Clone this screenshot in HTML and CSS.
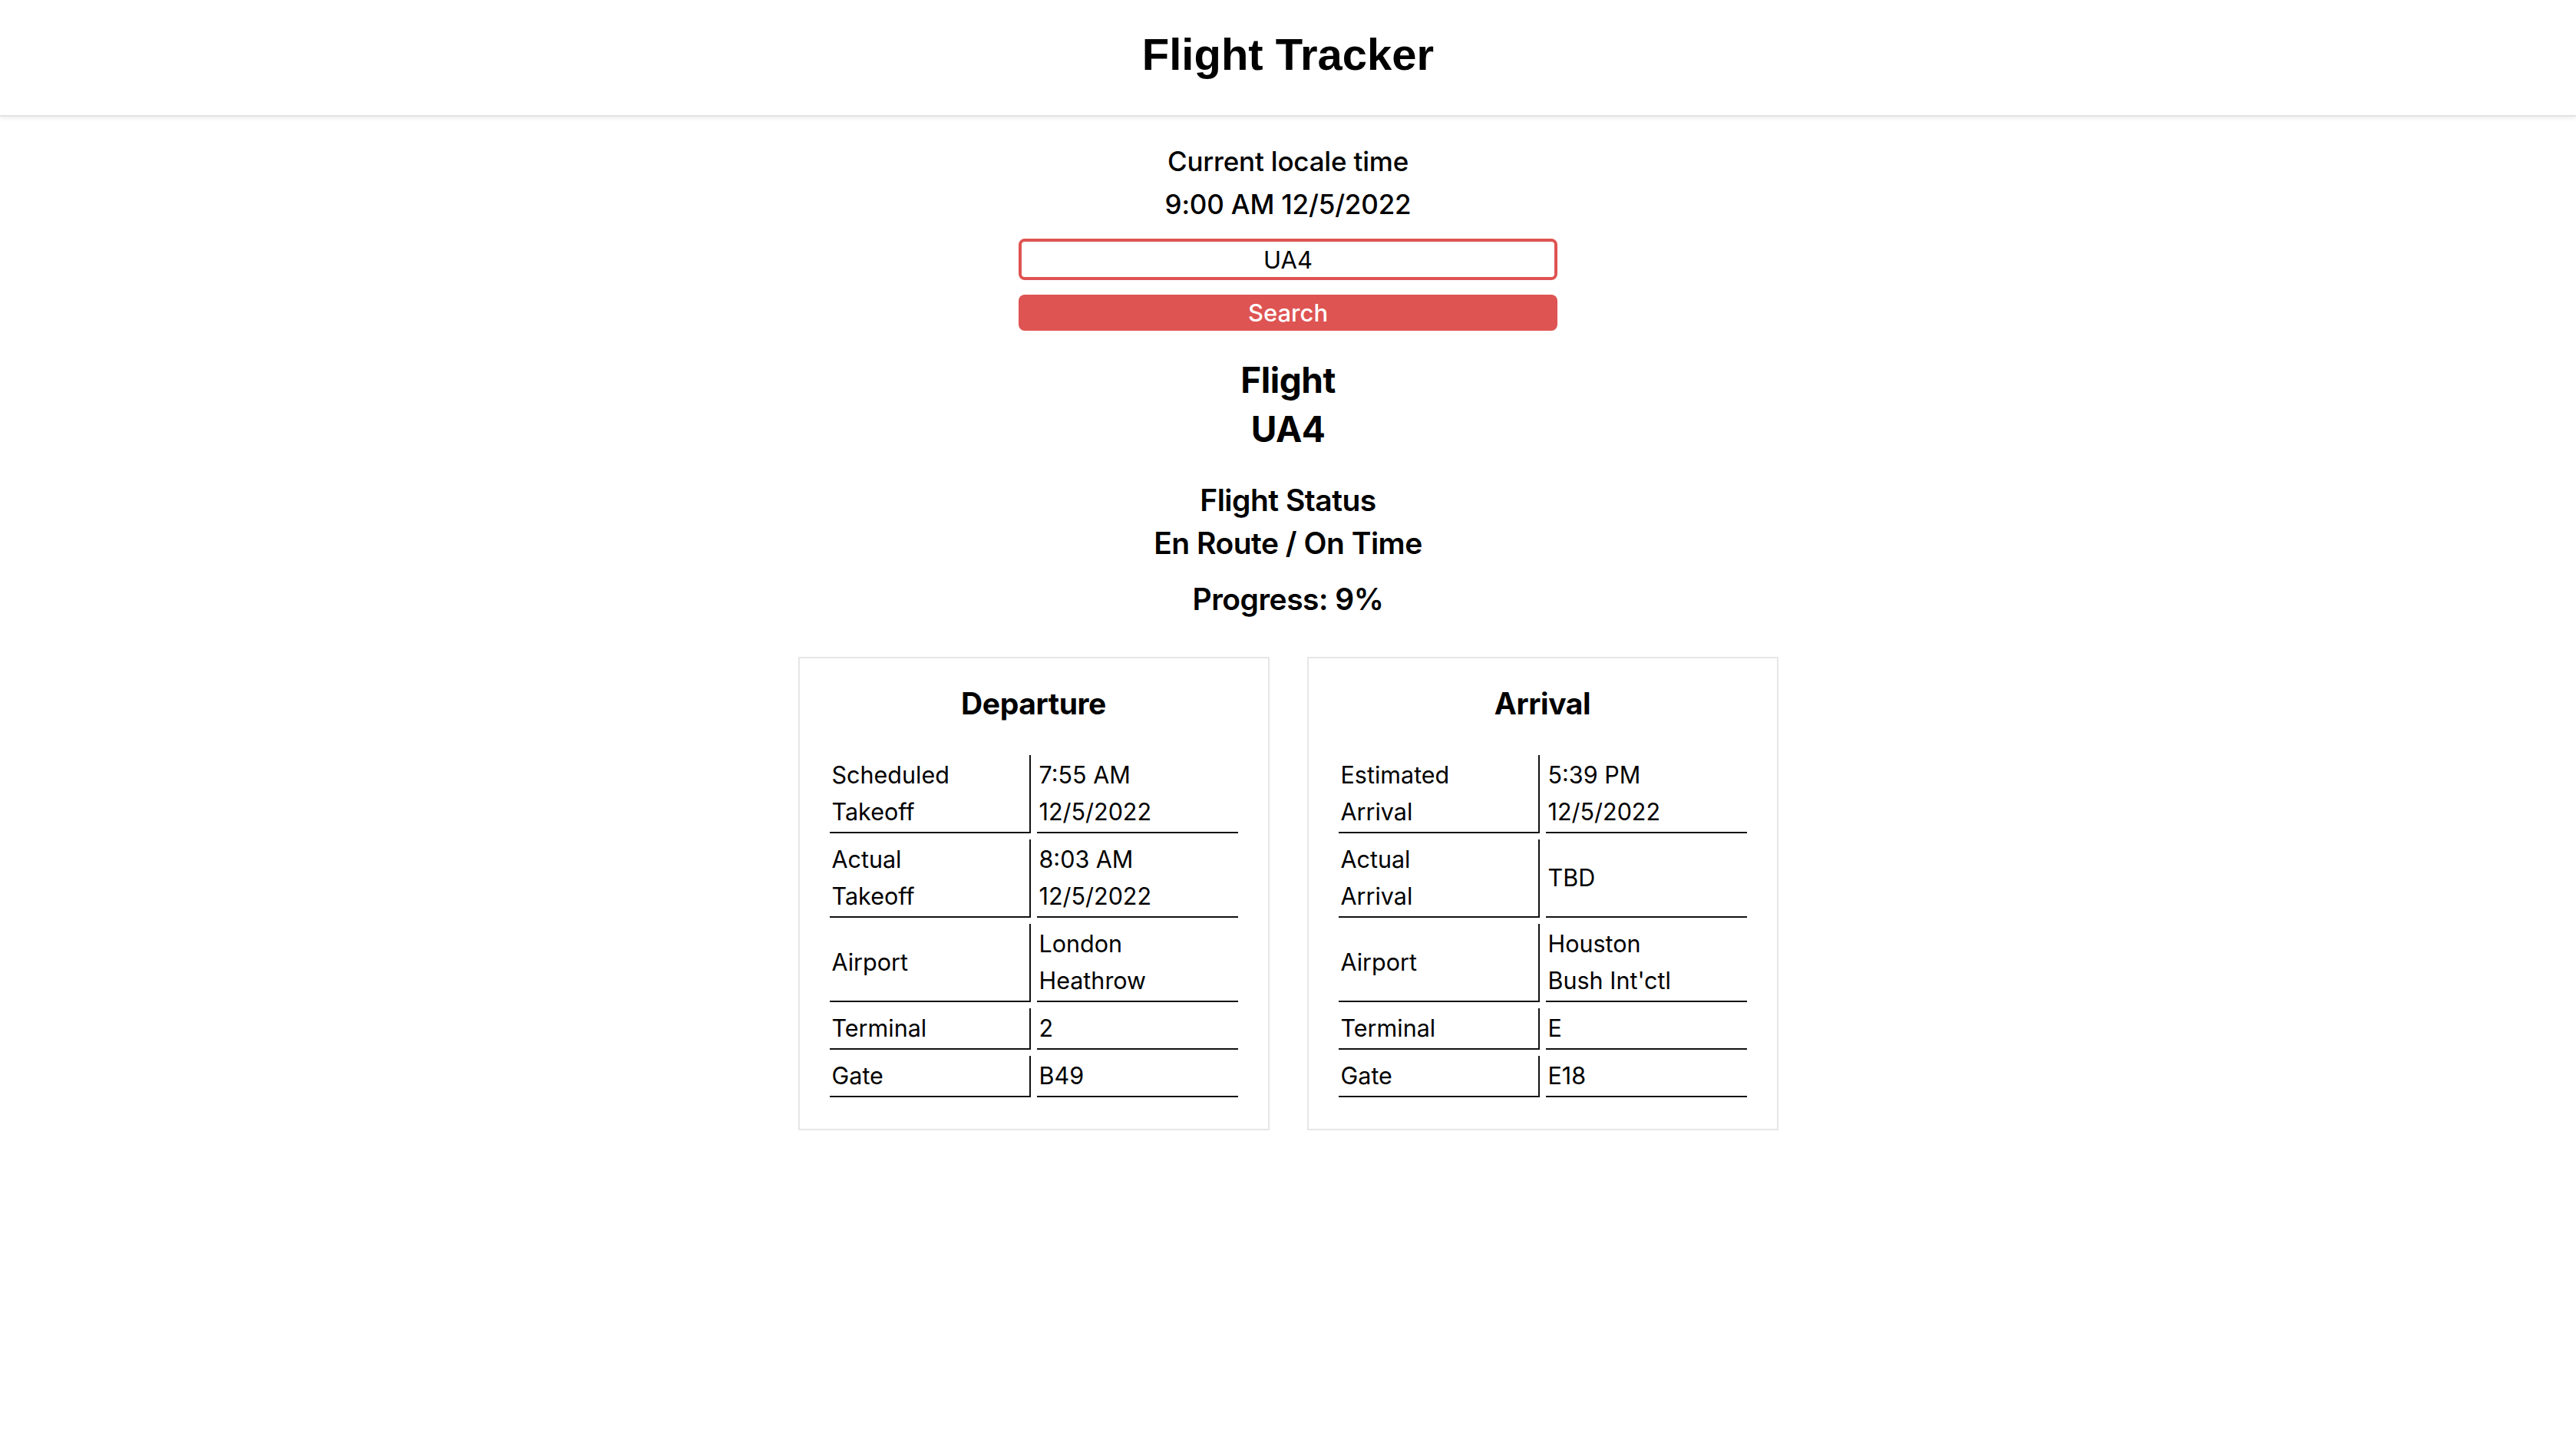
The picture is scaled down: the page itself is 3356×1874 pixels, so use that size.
FILE: index.html
```html
<!DOCTYPE html>
<html lang="en">
<head>
<meta charset="utf-8">
<title>Flight Tracker</title>
<link rel="stylesheet" href="styles.css">
</head>
<body>
<header class="topbar">
  <h1 class="brand">Flight Tracker</h1>
</header>
<main class="content">
  <p class="clock-label">Current locale time</p>
  <p class="clock-value">9:00 AM 12/5/2022</p>
  <form class="search">
    <input class="search-input" type="text" value="UA4">
    <button class="search-button" type="button">Search</button>
  </form>
  <h2 class="flight-title">Flight<br>UA4</h2>
  <p class="status">Flight Status<br>En Route / On Time</p>
  <p class="progress">Progress: 9%</p>
  <section class="cards">
    <div class="card">
      <h3 class="card-title">Departure</h3>
      <table class="details">
        <tr><td class="label">Scheduled<br>Takeoff</td><td class="value">7:55 AM<br>12/5/2022</td></tr>
        <tr><td class="label">Actual<br>Takeoff</td><td class="value">8:03 AM<br>12/5/2022</td></tr>
        <tr><td class="label">Airport</td><td class="value">London<br>Heathrow</td></tr>
        <tr><td class="label">Terminal</td><td class="value">2</td></tr>
        <tr><td class="label">Gate</td><td class="value">B49</td></tr>
      </table>
    </div>
    <div class="card">
      <h3 class="card-title">Arrival</h3>
      <table class="details">
        <tr><td class="label">Estimated<br>Arrival</td><td class="value">5:39 PM<br>12/5/2022</td></tr>
        <tr><td class="label">Actual<br>Arrival</td><td class="value">TBD</td></tr>
        <tr><td class="label">Airport</td><td class="value">Houston<br>Bush Int'ctl</td></tr>
        <tr><td class="label">Terminal</td><td class="value">E</td></tr>
        <tr><td class="label">Gate</td><td class="value">E18</td></tr>
      </table>
    </div>
  </section>
</main>
</body>
</html>
```
FILE: styles.css
```css
* { box-sizing: border-box; }

html, body {
  margin: 0;
  padding: 0;
  background: #ffffff;
  color: #000000;
  font-family: Inter, "Noto Sans", sans-serif;
}

.topbar {
  height: 152px;
  display: flex;
  align-items: center;
  justify-content: center;
  padding-bottom: 8px;
  border-bottom: 2px solid #e2e2e2;
  box-shadow: 0 2px 6px rgba(0, 0, 0, 0.08);
}

.brand {
  margin: 0;
  font-family: "Liberation Sans", Arial, sans-serif;
  font-weight: 700;
  font-size: 58px;
  line-height: 1;
}

.content {
  display: flex;
  flex-direction: column;
  align-items: center;
  text-align: center;
  padding-top: 30px;
}

.clock-label,
.clock-value {
  margin: 0;
  font-size: 35px;
  font-weight: 500;
  line-height: 56px;
  letter-spacing: -0.2px;
}

.search {
  display: flex;
  flex-direction: column;
  gap: 19px;
  width: 702px;
  margin-top: 17px;
}

.search-input {
  height: 54px;
  width: 100%;
  border: 4px solid #de5452;
  border-radius: 8px;
  text-align: center;
  font-family: Inter, sans-serif;
  font-size: 31px;
  color: #000;
  padding: 0;
  outline: none;
}

.search-button {
  height: 47px;
  width: 100%;
  border: none;
  border-radius: 8px;
  background: #de5452;
  color: #ffffff;
  font-family: Inter, sans-serif;
  font-size: 31px;
  font-weight: 500;
  padding: 0;
}

.flight-title {
  margin: 32px 0 0;
  font-size: 46px;
  font-weight: 700;
  line-height: 64px;
  letter-spacing: -0.5px;
}

.status {
  margin: 33px 0 0;
  font-size: 39px;
  font-weight: 600;
  line-height: 56px;
  letter-spacing: -0.5px;
}

.progress {
  margin: 17px 0 0;
  font-size: 39px;
  font-weight: 600;
  line-height: 56px;
  letter-spacing: -0.5px;
}

.cards {
  display: flex;
  gap: 49px;
  margin-top: 47px;
}

.card {
  width: 614px;
  border: 2px solid #e6e6e6;
  padding: 35px 31px 33px;
}

.card-title {
  margin: 0;
  font-size: 39px;
  font-weight: 700;
  line-height: 48px;
  letter-spacing: -0.4px;
}

.details {
  width: 100%;
  margin-top: 35px;
  table-layout: fixed;
  border-collapse: separate;
  border-spacing: 8px;
  text-align: left;
  font-size: 30.5px;
  line-height: 48px;
}

.details td {
  width: 50%;
  vertical-align: middle;
  padding: 2px 4px 2px 3px;
  border-bottom: 2px solid #111;
}

.details .label {
  border-right: 2px solid #111;
}
```
